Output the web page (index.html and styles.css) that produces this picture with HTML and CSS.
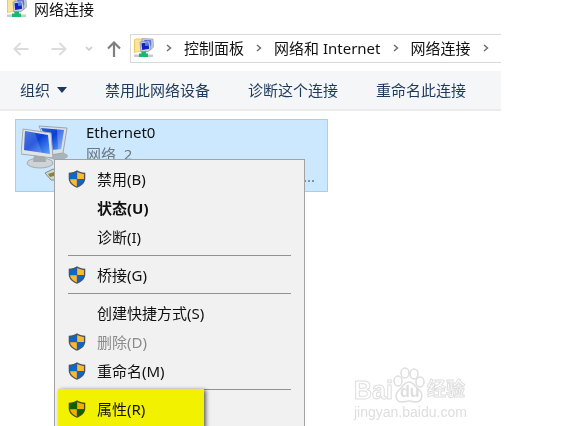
FILE: index.html
```html
<!DOCTYPE html>
<html lang="zh-CN">
<head>
  <meta charset="UTF-8">
  <meta name="viewport" content="width=device-width, initial-scale=1.0">
  <title>网络连接</title>
  <link rel="stylesheet" href="styles.css">
</head>
<body>

<!-- Shared icons -->
<svg class="sprite" aria-hidden="true">
  <symbol id="shield" viewBox="0 0 20 20">
    <path class="shield-edge" d="M10 .3C7.600 2 4.500 2.900.8 3v6.500c0 4.500 3.500 8 9.200 10.300 5.700-2.300 9.200-5.800 9.200-10.300V3C15.500 2.900 12.400 2 10 .3z"/>
    <path class="shield-a" d="M9.800 2.200C7.600 3.500 5 4.200 2.300 4.400V10h7.500z"/>
    <path class="shield-b" d="M10.200 2.200c2.200 1.300 4.800 2 7.500 2.200V10h-7.500z"/>
    <path class="shield-b" d="M2.300 10.300h7.500v7.900c-4.500-2-7.200-4.500-7.500-7.900z"/>
    <path class="shield-a" d="M17.700 10.300h-7.500v7.900c4.500-2 7.200-4.500 7.500-7.900z"/>
  </symbol>
  <symbol id="network" viewBox="0 0 20 20">
    <path d="M0 1.500L2 .5h6v13L0 15z" fill="#ecc964"/>
    <path d="M1 1.500h6v11.500l-6 1z" fill="#fbe59a"/>
    <path d="M8 .5l11 .5.500 8-3 3H9z" fill="#c3cad6" stroke="#8b94a6" stroke-width=".6"/>
    <path d="M10 2l7 .3.300 5.200-3 2z" fill="#4f62dc"/>
    <path d="M6 4l9.500-1 1.500 8-3 2.500-7 .5z" fill="#ccd2e2" stroke="#7f89a0" stroke-width=".7"/>
    <path d="M7.500 5.200l6.700-.8 1 6.300-7 1.300z" fill="#1322ba"/>
    <path d="M11 4.800l3.200-.4.500 3-3.500.5z" fill="#4e86f0"/>
    <path d="M0 16.500h19v2.500H0z" fill="#c5cbd0"/>
    <path d="M7.500 13.500h4.500v2h2V19H5v-3.500h2.500z" fill="#19b86c"/>
  </symbol>
  <symbol id="chevron" viewBox="0 0 6 8">
    <path d="M1 1l3.500 3L1 7" fill="none" stroke="#6f6f6f" stroke-width="1.500"/>
  </symbol>
</svg>

<div class="window">
  <header class="titlebar">
    <svg class="network-icon"><use href="#network"/></svg>
    <span>网络连接</span>
  </header>

  <div class="navbar">
    <button class="nav-btn" aria-label="后退">
      <svg width="16" height="14" viewBox="0 0 16 14"><path d="M7.500 1L1.500 7l6 6M2 7h13.500" fill="none" stroke="#dcdcdc" stroke-width="2"/></svg>
    </button>
    <button class="nav-btn" aria-label="前进">
      <svg width="16" height="14" viewBox="0 0 16 14"><path d="M8.500 1l6 6-6 6M14 7H.5" fill="none" stroke="#dcdcdc" stroke-width="2"/></svg>
    </button>
    <button class="nav-btn nav-recent" aria-label="最近位置">
      <svg width="8" height="6" viewBox="0 0 8 6"><path d="M1 1l3 3 3-3" fill="none" stroke="#d2d2d2" stroke-width="1.800"/></svg>
    </button>
    <button class="nav-btn nav-up" aria-label="上移">
      <svg width="14" height="16" viewBox="0 0 14 16"><path d="M1 7.500l6-6 6 6M7 2v14" fill="none" stroke="#7f7f7f" stroke-width="2.200"/></svg>
    </button>
    <nav class="address">
      <svg class="network-icon"><use href="#network"/></svg>
      <svg class="chevron"><use href="#chevron"/></svg>
      <a href="#">控制面板</a>
      <svg class="chevron"><use href="#chevron"/></svg>
      <a href="#">网络和 Internet</a>
      <svg class="chevron"><use href="#chevron"/></svg>
      <a href="#">网络连接</a>
      <svg class="chevron"><use href="#chevron"/></svg>
    </nav>
  </div>

  <div class="toolbar">
    <button class="organize">组织
      <svg width="10" height="6" viewBox="0 0 10 6"><path d="M0 0h10L5 6z" fill="#1e395b"/></svg>
    </button>
    <button>禁用此网络设备</button>
    <button>诊断这个连接</button>
    <button>重命名此连接</button>
  </div>

  <main class="content">
    <div class="adapter">
      <svg class="adapter-icon" width="50" height="56" viewBox="0 0 50 56">
        <defs>
          <linearGradient id="screen" x1="0" y1="0" x2="1" y2="1">
            <stop offset="0" stop-color="#2b5fe0"/>
            <stop offset=".45" stop-color="#0a3fd6"/>
            <stop offset="1" stop-color="#5fa4fa"/>
          </linearGradient>
        </defs>
        <ellipse cx="37" cy="31" rx="10" ry="4" fill="#a9b4bd"/>
        <path d="M18 1l28 2-4 25-12 2z" fill="#d9dfe2" stroke="#9da7ad"/>
        <path d="M20 3l23 2-3 19-9 1z" fill="url(#screen)"/>
        <path d="M36 4l7 1-3 19-3 .5z" fill="#fff" opacity=".25"/>
        <ellipse cx="19" cy="38" rx="13" ry="5" fill="#cfd3d5" stroke="#a5abae"/>
        <path d="M13 29h11l1 8H12z" fill="#a5abae"/>
        <path d="M2 4l28 4 2 25-32-4z" fill="#e1e4e4" stroke="#a2a9ac"/>
        <path d="M4 6l23 4 2 19-26-4z" fill="url(#screen)"/>
        <path d="M4 6l10 2 7 20-18-3z" fill="#fff" opacity=".15"/>
        <path d="M24 48l8-4 9 4v7H30z" fill="#d3d7c9" stroke="#858b80"/>
        <path d="M27 49l6-2v4l-4 1z" fill="#8c8240"/>
      </svg>
      <div class="adapter-info">
        <div class="adapter-name">Ethernet0</div>
        <div class="adapter-net">网络&nbsp; 2</div>
        <div class="adapter-device">...</div>
      </div>

      <div class="menu" role="menu">
        <button class="menu-item" role="menuitem"><svg class="shield"><use href="#shield"/></svg>禁用(B)</button>
        <button class="menu-item default" role="menuitem">状态(U)</button>
        <button class="menu-item" role="menuitem">诊断(I)</button>
        <hr>
        <button class="menu-item" role="menuitem"><svg class="shield"><use href="#shield"/></svg>桥接(G)</button>
        <hr>
        <button class="menu-item" role="menuitem">创建快捷方式(S)</button>
        <button class="menu-item" role="menuitem" disabled><svg class="shield"><use href="#shield"/></svg>删除(D)</button>
        <button class="menu-item" role="menuitem"><svg class="shield"><use href="#shield"/></svg>重命名(M)</button>
        <hr>
        <button class="menu-item marked" role="menuitem"><svg class="shield"><use href="#shield"/></svg>属性(R)</button>
      </div>
    </div>
  </main>
</div>

<div class="watermark">
  <div class="watermark-logo">
    <span>Bai</span>
    <span class="paw">
      <svg width="32" height="36" viewBox="0 0 32 36">
        <g fill="#fff" stroke="#dedede" stroke-width="1.500">
          <ellipse cx="5" cy="14" rx="4" ry="5"/>
          <ellipse cx="12" cy="6" rx="4" ry="5"/>
          <ellipse cx="21" cy="7" rx="4" ry="5"/>
          <ellipse cx="27" cy="15" rx="4" ry="5"/>
          <path d="M16 15c5 0 6 5 10 8 5 4 3 12-3 12-3 0-4-1-7-1s-4 1-7 1c-6 0-8-7-3-12 4-3 5-8 10-8z"/>
        </g>
      </svg>
      <span class="du">du</span>
    </span>
    <span class="jingyan">经验</span>
  </div>
  <div class="watermark-url">jingyan.baidu.com</div>
</div>

</body>
</html>
```
FILE: styles.css
```css
* {
  box-sizing: border-box;
}
body {
  margin: 0;
  height: 100vh;
  overflow: hidden;
  position: relative;
  background-color: #fff;
  color: #111;
  font-family: "Noto Sans", "Noto Sans CJK SC", sans-serif;
  font-size: 15px;
  line-height: 20px;
}
button {
  padding: 0;
  border: 0;
  background: none;
  color: inherit;
  font: inherit;
  text-align: left;
  white-space: nowrap;
}
a {
  color: inherit;
  text-decoration: none;
  white-space: nowrap;
}
svg {
  display: block;
  flex-shrink: 0;
}
.sprite {
  display: none;
}
.window {
  margin-right: 72px;
}
.network-icon {
  width: 20px;
  height: 20px;
}

/* Title bar */
.titlebar {
  display: flex;
  align-items: flex-end;
  gap: 7px;
  height: 18px;
  padding-left: 7px;
  line-height: 18px;
}

/* Navigation row */
.navbar {
  display: flex;
  align-items: center;
  padding: 16px 0 8px 13px;
}
.nav-btn {
  margin-right: 22px;
}
.nav-recent {
  margin-right: 14px;
  margin-left: -4px;
}
.nav-up {
  margin-right: 9px;
}
.address {
  flex: 1;
  display: flex;
  align-items: center;
  gap: 12px;
  height: 29px;
  padding-left: 3px;
  padding-bottom: 2px;
  border: 1px solid #d9d9d9;
  border-right: 0;
}
.chevron {
  width: 6px;
  height: 8px;
}

/* Command bar */
.toolbar {
  display: flex;
  align-items: center;
  gap: 38px;
  height: 40px;
  padding-left: 20px;
  background-color: #f5f6f7;
  border-bottom: 2px solid #ececec;
  color: #1e395b;
}
.organize {
  display: flex;
  align-items: center;
  gap: 7px;
}

/* Connections */
.content {
  padding: 8px 0 0 15px;
}
.adapter {
  position: relative;
  display: flex;
  gap: 15px;
  width: 313px;
  height: 73px;
  padding: 1px 12px 0 5px;
  background-color: #cce8ff;
  border: 1px solid #99d1ff;
}
.adapter-icon {
  margin-top: 4px;
}
.adapter-info {
  flex: 1;
  line-height: 22px;
}
.adapter-net {
  color: #6d7780;
}
.adapter-device {
  color: #6d7780;
  text-align: right;
}

/* Context menu */
.menu {
  position: absolute;
  top: 39px;
  left: 38px;
  width: 251px;
  padding: 4px 3px;
  background-color: #f1f1f1;
  border: 1px solid #a3a3a3;
}
.menu-item {
  display: flex;
  align-items: center;
  width: 100%;
  height: 29px;
  padding-left: 39px;
}
.menu-item:disabled {
  color: #8b8b8b;
}
.default {
  font-weight: bold;
}
.menu hr {
  height: 1px;
  margin: 4px 10px;
  border: 0;
  background-color: #919191;
}
.shield {
  width: 18px;
  height: 20px;
  margin-left: -29px;
  margin-right: 11px;
}
.shield-edge {
  fill: #4b5560;
}
.shield-a {
  fill: #0a67cc;
}
.shield-b {
  fill: #ffb92e;
}
.marked {
  position: relative;
  width: 146px;
  height: 39px;
  margin-top: -5px;
  background-color: #f2f200;
  box-shadow: 2px 1px 4px rgba(0, 0, 0, 0.6);
}
/* the marker tints the shield too */
.marked .shield {
  mix-blend-mode: multiply;
}
.marked .shield-a {
  fill: #0a6600;
}
.marked .shield-b {
  fill: #ffb900;
}

/* Watermark */
.watermark {
  position: absolute;
  left: 354px;
  bottom: 5px;
  color: #fff;
  font-family: "Liberation Sans", "Noto Sans CJK SC", sans-serif;
}
.watermark-logo {
  display: flex;
  align-items: flex-end;
  font-size: 25px;
  font-weight: bold;
  line-height: 26px;
  -webkit-text-stroke: 1px #dedede;
}
.paw {
  position: relative;
}
.du {
  position: absolute;
  top: 15px;
  left: 7px;
  color: #dedede;
  font-size: 16px;
  line-height: 20px;
  -webkit-text-stroke: 0;
}
.jingyan {
  font-size: 19px;
  margin-left: 2px;
}
.watermark-url {
  color: #dedede;
  font-size: 14px;
  line-height: 18px;
}
```
